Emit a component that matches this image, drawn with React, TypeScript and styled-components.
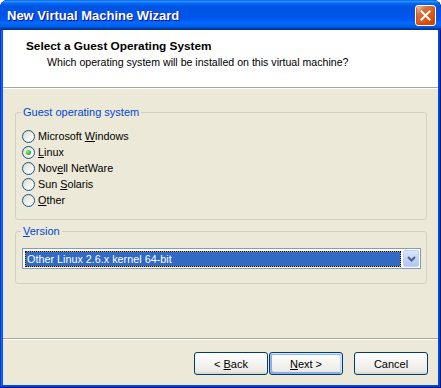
import React from "react";
import styled, { createGlobalStyle, css } from "styled-components";

const Global = createGlobalStyle`
  html, body { margin: 0; padding: 0; background: #ffffff; }
  body { font-family: "Liberation Sans", Arial, sans-serif; font-size: 11px; color: #000; }
  #root { width: 441px; height: 388px; }
`;

const Window = styled.div`
  width: 441px;
  height: 388px;
  box-sizing: border-box;
  display: flex;
  flex-direction: column;
  background: #0055ea;
  border-radius: 8px 8px 0 0;
  box-shadow: inset -1px -1px #00138c, inset 1px 1px #0831d9, inset -2px -2px #0042d0,
    inset 2px 2px #166aee, inset -3px -3px #0050e0, inset 3px 3px #0058ee;
  overflow: hidden;
`;

const TitleBar = styled.div`
  height: 30px;
  flex: none;
  display: flex;
  align-items: center;
  padding: 0 5px 0 7px;
  box-sizing: border-box;
  border-radius: 8px 8px 0 0;
  background: linear-gradient(180deg, #0058ee 0%, #3593ff 4%, #288eff 6%, #127dff 8%, #036ffc 10%,
    #0262ee 14%, #0057e5 20%, #0054e3 24%, #0055eb 56%, #005bf5 66%, #026afe 76%, #0062ef 86%,
    #0052d6 92%, #0040ab 94%, #003092 100%);
`;

const TitleText = styled.div`
  flex: 1;
  color: #fff;
  font-weight: bold;
  font-size: 13px;
  text-shadow: 1px 1px #0f1089;
  padding-top: 1px;
`;

const CloseButton = styled.div`
  width: 21px;
  height: 21px;
  box-sizing: border-box;
  border: 1px solid #fff;
  border-radius: 3px;
  background: radial-gradient(circle at 90% 90%, #cc4600 0%, #dc6527 55%, #cd7546 70%, #ffccb2 90%, #fff 100%);
  box-shadow: inset 0 -1px 2px 1px #da4600;
  display: flex;
  align-items: center;
  justify-content: center;
`;

const Client = styled.div`
  flex: 1;
  margin: 0 3px 3px;
  background: #ece9d8;
  display: flex;
  flex-direction: column;
  min-height: 0;
`;

const Header = styled.div`
  height: 58px;
  flex: none;
  box-sizing: border-box;
  background: #fff;
  border-bottom: 1px solid #aca899;
  box-shadow: 0 1px 0 #fff;
  padding: 9px 0 0 23px;
`;

const HeaderTitle = styled.div`
  font-weight: bold;
  font-size: 11.8px;
  line-height: 14px;
`;

const HeaderSub = styled.div`
  font-size: 10.6px;
  line-height: 14px;
  margin-top: 2px;
  padding-left: 21px;
`;

const Content = styled.div`
  flex: 1;
  display: flex;
  flex-direction: column;
  padding: 1px 11px 0 12px;
`;

const Group = styled.fieldset<{ $top: number; $bottom: number }>`
  margin: ${(p) => p.$top}px 0 0;
  padding: 0 5px ${(p) => p.$bottom}px 5px;
  border: 1px solid #d0d0bf;
  border-radius: 3px;
  min-width: 0;
`;

const Legend = styled.legend`
  color: #0046d5;
  padding: 0 2px;
  font-size: 11px;
  line-height: 13px;
`;

const RadioList = styled.div`
  display: flex;
  flex-direction: column;
  padding: 9px 0 0 1px;
`;

const RadioRow = styled.div`
  height: 16px;
  display: flex;
  align-items: center;
  gap: 3px;
  font-size: 10.8px;
`;

const RadioDot = styled.span<{ $checked?: boolean }>`
  width: 13px;
  height: 13px;
  box-sizing: border-box;
  border-radius: 50%;
  border: 1px solid #1c5180;
  background: linear-gradient(135deg, #dcd9cb 0%, #f4f3ee 60%, #ffffff 90%);
  display: flex;
  align-items: center;
  justify-content: center;
  flex: none;
  ${(p) =>
    p.$checked &&
    css`
      &::after {
        content: "";
        width: 5px;
        height: 5px;
        border-radius: 50%;
        background: radial-gradient(circle at 35% 35%, #7ef07a 0%, #3cc238 50%, #1d9a1d 100%);
      }
    `}
`;

const Key = styled.span`
  text-decoration: underline;
  text-underline-offset: 1px;
`;

const Select = styled.div`
  margin: 10px 0 0 1px;
  height: 21px;
  box-sizing: border-box;
  border: 1px solid #7f9db9;
  background: #fff;
  display: flex;
  align-items: center;
  padding: 0 1px 0 2px;
  gap: 2px;
`;

const Selected = styled.div`
  flex: 1;
  height: 16px;
  box-sizing: border-box;
  border: 1px dotted #111;
  background: linear-gradient(#316ac5, #316ac5) padding-box, linear-gradient(#c9a24c, #c9a24c) border-box;
  color: #fff;
  font-size: 10.8px;
  line-height: 14px;
  padding-left: 1px;
`;

const DropButton = styled.div`
  width: 16px;
  height: 17px;
  box-sizing: border-box;
  border: 1px solid #bcd0f7;
  border-radius: 2px;
  background: linear-gradient(180deg, #dbe6fd 0%, #c3d4fb 50%, #b3c7f5 100%);
  display: flex;
  align-items: center;
  justify-content: center;
`;

const Footer = styled.div`
  flex: none;
  border-top: 1px solid #aca899;
  box-shadow: inset 0 1px 0 #fff;
  padding: 13px 10px 10px 0;
  display: flex;
  justify-content: flex-end;
`;

const Button = styled.button<{ $default?: boolean; $gap?: number }>`
  width: 74px;
  height: 23px;
  margin-left: ${(p) => p.$gap ?? 0}px;
  box-sizing: border-box;
  border: 1px solid #003c74;
  border-radius: 3px;
  background: linear-gradient(180deg, #fff, #ecebe6 86%, #d6d0c5);
  font-family: "Liberation Sans", Arial, sans-serif;
  font-size: 11px;
  color: #000;
  padding: 0;
  ${(p) =>
    p.$default &&
    css`
      box-shadow: inset -1px 1px #cee7ff, inset 1px 2px #98b8ea, inset -2px 2px #bcd4f6,
        inset 1px -1px #89ade4, inset 2px -2px #89ade4;
    `}
`;

const options: { pre: string; key: string; post: string; checked?: boolean }[] = [
  { pre: "Microsoft ", key: "W", post: "indows" },
  { pre: "", key: "L", post: "inux", checked: true },
  { pre: "Nov", key: "e", post: "ll NetWare" },
  { pre: "Sun ", key: "S", post: "olaris" },
  { pre: "", key: "O", post: "ther" },
];

export default function App() {
  return (
    <>
      <Global />
      <Window>
        <TitleBar>
          <TitleText>New Virtual Machine Wizard</TitleText>
          <CloseButton>
            <svg width="11" height="11" viewBox="0 0 11 11">
              <path d="M1.5 1.5 L9.5 9.5 M9.5 1.5 L1.5 9.5" stroke="#fff" strokeWidth="2" strokeLinecap="square" />
            </svg>
          </CloseButton>
        </TitleBar>
        <Client>
          <Header>
            <HeaderTitle>Select a Guest Operating System</HeaderTitle>
            <HeaderSub>Which operating system will be installed on this virtual machine?</HeaderSub>
          </Header>
          <Content>
            <Group $top={17} $bottom={11}>
              <Legend>Guest operating system</Legend>
              <RadioList>
                {options.map((o) => (
                  <RadioRow key={o.pre + o.key + o.post}>
                    <RadioDot $checked={o.checked} />
                    <span>
                      {o.pre}
                      <Key>{o.key}</Key>
                      {o.post}
                    </span>
                  </RadioRow>
                ))}
              </RadioList>
            </Group>
            <Group $top={5} $bottom={14}>
              <Legend>
                <Key>V</Key>ersion
              </Legend>
              <Select>
                <Selected>Other Linux 2.6.x kernel 64-bit</Selected>
                <DropButton>
                  <svg width="9" height="6" viewBox="0 0 9 6">
                    <path d="M1 1 L4.5 4.5 L8 1" stroke="#4d6185" strokeWidth="2" fill="none" />
                  </svg>
                </DropButton>
              </Select>
            </Group>
          </Content>
          <Footer>
            <Button>
              &lt; <Key>B</Key>ack
            </Button>
            <Button $default $gap={1}>
              <Key>N</Key>ext &gt;
            </Button>
            <Button $gap={11}>Cancel</Button>
          </Footer>
        </Client>
      </Window>
    </>
  );
}
